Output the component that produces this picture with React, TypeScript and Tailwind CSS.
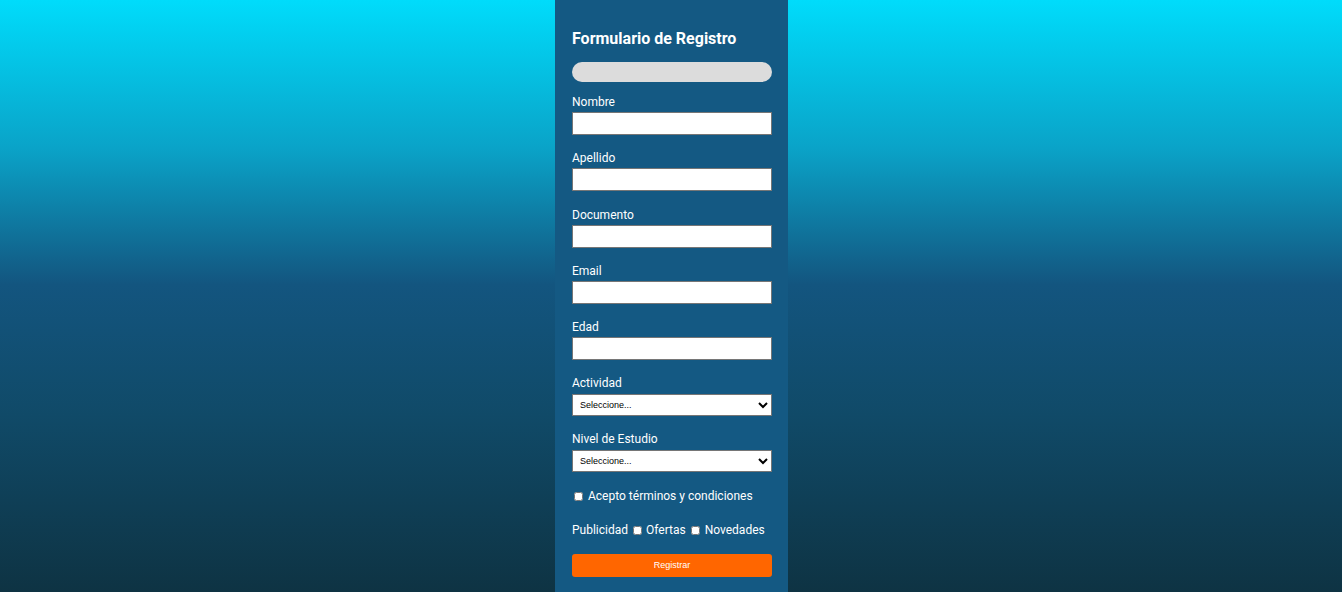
import React from 'react';

const fields = ['Nombre', 'Apellido', 'Documento', 'Email', 'Edad'];

const App: React.FC = () => {
  return (
    <div className="min-h-[592px] w-full flex justify-center pl-px bg-[linear-gradient(to_bottom,#00dcfb_0%,#0aa3c8_25%,#13557f_48%,#104a68_70%,#0e3343_100%)] font-['Roboto',sans-serif]">
      <form className="w-[233px] bg-[#145983] pl-[17px] pr-4 pt-[29px] pb-4 text-white" onSubmit={e => e.preventDefault()}>
        <h1 className="text-base leading-5 font-bold text-white">Formulario de Registro</h1>
        <div className="mt-[13px] h-5 w-full rounded-full bg-[#dcdcdc]"></div>

        <div className="mt-[13px]">
          {fields.map(f => (
            <div key={f} className="mb-[16.25px]">
              <label className="block text-xs leading-[14px]">{f}</label>
              <input type="text" className="mt-[3px] block h-[23px] w-full bg-white border border-[#767676] text-black text-xs px-1" />
            </div>
          ))}
        </div>

        <div>
          <label className="block text-xs leading-[14px]">Actividad</label>
          <select className="mt-1 block h-[22px] w-full bg-white border border-[#767676] text-black text-[9px] pl-[3px] pr-1 font-['Liberation_Sans',sans-serif]">
            <option>Seleccione...</option>
          </select>
        </div>

        <div className="mt-4">
          <label className="block text-xs leading-[14px]">Nivel de Estudio</label>
          <select className="mt-1 block h-[22px] w-full bg-white border border-[#767676] text-black text-[9px] pl-[3px] pr-1 font-['Liberation_Sans',sans-serif]">
            <option>Seleccione...</option>
          </select>
        </div>

        <div className="flex items-center gap-[5px] text-xs leading-[14px] pl-[2px] mt-[17px]">
          <input type="checkbox" className="w-[9px] h-[9px] m-0" />
          <span>Acepto términos y condiciones</span>
        </div>

        <div className="flex items-center text-xs leading-[14px] mt-5">
          <span>Publicidad</span>
          <input type="checkbox" className="w-[9px] h-[9px] ml-[5px] mr-1" />
          <span>Ofertas</span>
          <input type="checkbox" className="w-[9px] h-[9px] ml-[5px] mr-[5px]" />
          <span>Novedades</span>
        </div>

        <button type="submit" className="mt-[17px] block h-[23px] w-full rounded-[3px] bg-[#ff6600] text-white text-[9px] font-['Liberation_Sans',sans-serif]">
          Registrar
        </button>
      </form>
    </div>
  );
};

export default App;
